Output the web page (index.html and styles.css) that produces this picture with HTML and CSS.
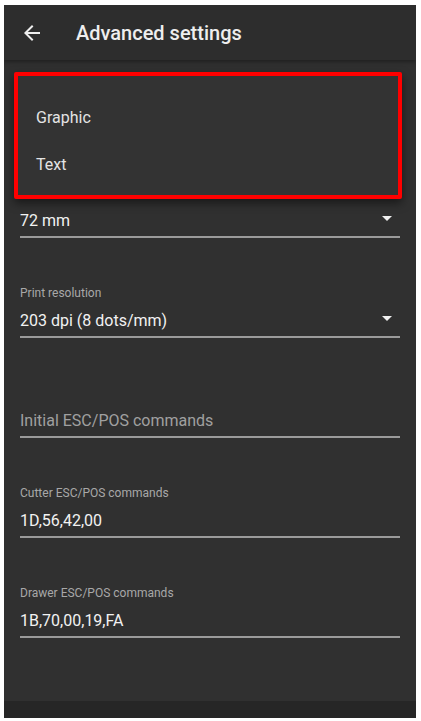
FILE: index.html
```html
<!DOCTYPE html>
<html>
<head>
<meta charset="utf-8">
<link rel="stylesheet" href="styles.css">
</head>
<body>
<div class="screen">
  <header class="toolbar">
    <svg class="back" viewBox="0 0 24 24" width="24" height="24"><path d="M20 11H7.83l5.59-5.59L12 4l-8 8 8 8 1.41-1.41L7.83 13H20v-2z" fill="#eeeeee"/></svg>
    <h1 class="title">Advanced settings</h1>
  </header>
  <main class="content">
    <div class="field">
      <div class="label"></div>
      <div class="value-row"><span class="value">72 mm</span><svg class="drop" viewBox="0 0 24 24" width="24" height="24"><path d="M7 10l5 5 5-5z" fill="#f0f0f0"/></svg></div>
      <div class="line"></div>
    </div>
    <div class="field">
      <div class="label">Print resolution</div>
      <div class="value-row"><span class="value">203 dpi (8 dots/mm)</span><svg class="drop" viewBox="0 0 24 24" width="24" height="24"><path d="M7 10l5 5 5-5z" fill="#f0f0f0"/></svg></div>
      <div class="line"></div>
    </div>
    <div class="field">
      <div class="label"></div>
      <div class="value-row"><span class="hint">Initial ESC/POS commands</span></div>
      <div class="line"></div>
    </div>
    <div class="field">
      <div class="label">Cutter ESC/POS commands</div>
      <div class="value-row"><span class="value">1D,56,42,00</span></div>
      <div class="line"></div>
    </div>
    <div class="field">
      <div class="label">Drawer ESC/POS commands</div>
      <div class="value-row"><span class="value">1B,70,00,19,FA</span></div>
      <div class="line"></div>
    </div>
  </main>
  <div class="navbar"></div>
  <div class="menu">
    <div class="menu-item">Graphic</div>
    <div class="menu-item">Text</div>
  </div>
</div>
</body>
</html>
```
FILE: styles.css
```css
html, body {
  margin: 0;
  padding: 0;
  background: #ffffff;
}
body {
  padding: 5px 5px 3px 4px;
  font-family: Roboto, "Noto Sans", sans-serif;
}
.screen {
  position: relative;
  width: 412px;
  height: 713px;
  background: #303030;
  display: flex;
  flex-direction: column;
  overflow: hidden;
}
.toolbar {
  height: 55px;
  flex: none;
  background: #2d2d2d;
  display: flex;
  align-items: center;
  padding-left: 16px;
  box-shadow: 0 2px 4px rgba(0,0,0,0.35);
  position: relative;
  z-index: 1;
}
.back {
  display: block;
  margin-top: 1px;
}
.title {
  margin: 0 0 0 32px;
  font-size: 20px;
  font-weight: 500;
  color: #eeeeee;
  letter-spacing: 0;
}
.content {
  flex: 1;
  padding: 100px 16px 0 16px;
}
.field {
  height: 100px;
  box-sizing: border-box;
  padding-top: 25px;
  display: flex;
  flex-direction: column;
}
.label {
  height: 16px;
  line-height: 16px;
  font-size: 12px;
  color: #a8a8a8;
}
.value-row {
  margin-top: 7px;
  height: 24px;
  display: flex;
  align-items: center;
  justify-content: space-between;
}
.value {
  font-size: 16px;
  color: #f2f2f2;
}
.hint {
  font-size: 16px;
  color: #a0a0a0;
}
.drop {
  display: block;
  margin-right: 1px;
  margin-bottom: 5px;
}
.line {
  margin-top: 4px;
  height: 2px;
  background: #9a9a9a;
}
.navbar {
  height: 17px;
  flex: none;
  background: #262626;
}
.menu {
  position: absolute;
  left: 10px;
  top: 67px;
  width: 380px;
  height: 101px;
  border: 4px solid #ff0000;
  border-radius: 2px;
  background: #333333;
  box-shadow: 0 4px 10px rgba(0,0,0,0.5);
  padding-top: 18px;
  box-sizing: content-box;
  z-index: 2;
}
.menu-item {
  height: 47px;
  line-height: 47px;
  padding-left: 18px;
  font-size: 16px;
  color: #e4e4e4;
}
```
